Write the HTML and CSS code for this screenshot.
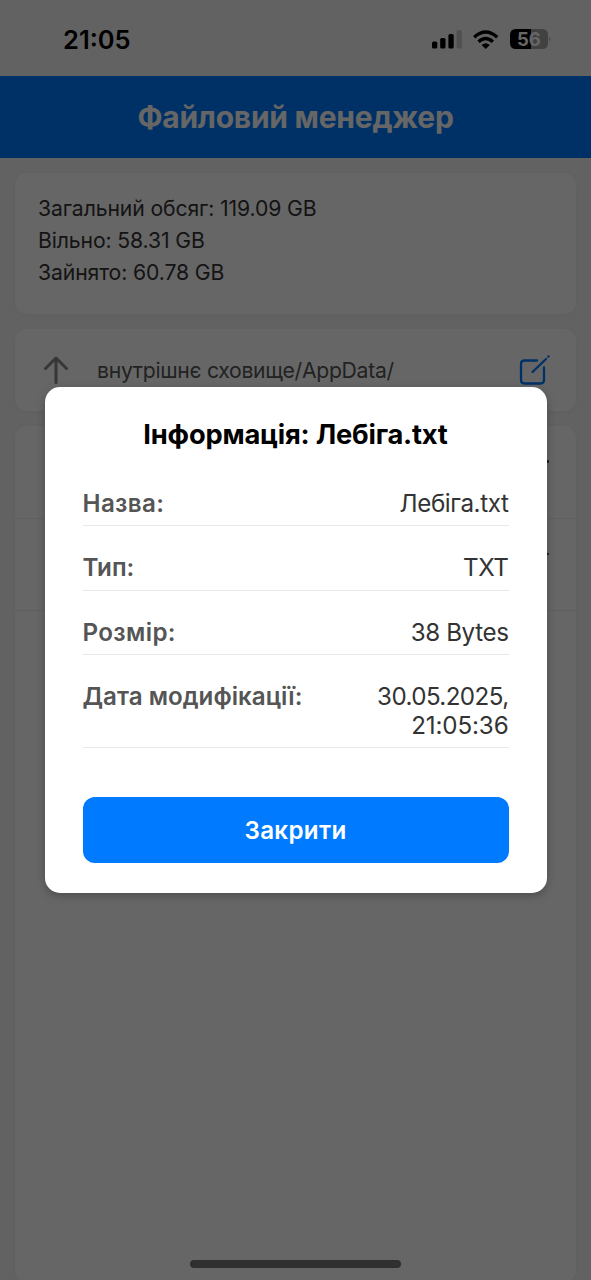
FILE: index.html
```html
<!DOCTYPE html>
<html lang="uk">
<head>
<meta charset="utf-8">
<title>Файловий менеджер</title>
<link rel="stylesheet" href="styles.css">
</head>
<body>
<div class="screen">
  <div class="status-bar">
    <span class="time">21:05</span>
    <svg class="status-icons" width="122" height="30" viewBox="0 0 122 30">
      <rect x="2" y="16.5" width="5.3" height="7" rx="1.6"/>
      <rect x="10.2" y="13" width="5.3" height="10.5" rx="1.6"/>
      <rect x="18.4" y="9" width="5.3" height="14.5" rx="1.6"/>
      <rect x="26.6" y="5" width="5.3" height="18.5" rx="1.6" fill="#c8c8c8"/>
      <g fill="none" stroke="#000" stroke-width="3.4">
        <path d="M44.2 12.2Q55.7 2 67.2 12.2"/>
        <path d="M48.5 16.7Q55.7 10.2 62.9 16.7"/>
      </g>
      <path d="M51.6 20Q55.7 16.4 59.8 20L55.7 24Z"/>
      <path d="M86 4H101V24H86Q80 24 80 18V10Q80 4 86 4Z"/>
      <path d="M101 4H112Q118 4 118 10V18Q118 24 112 24H101Z" fill="#a3a3a3"/>
      <path d="M119.3 11.4Q121.5 14 119.3 16.8Z" fill="#a3a3a3"/>
      <text class="battery-label" x="87" y="20.5">56</text>
    </svg>
  </div>
  <header class="app-header">Файловий менеджер</header>
  <main class="content">
    <section class="card storage">
      <div><span>Загальний обсяг: 119.09 GB</span></div>
      <div><span>Вільно: 58.31 GB</span></div>
      <div><span>Зайнято: 60.78 GB</span></div>
    </section>
    <section class="card path-bar">
      <svg class="up-icon" width="28" height="30" viewBox="0 0 28 30"><path d="M14 27.500V3M3.500 13.500L14 3L24.500 13.500"/></svg>
      <span class="path">внутрішнє сховище/AppData/</span>
      <svg class="edit-icon" width="32" height="32" viewBox="0 0 32 32"><path d="M18 6.500H5.500Q2 6.500 2 10V26Q2 29.500 5.500 29.500H21.500Q25 29.500 25 26V13.500"/><path d="M13.500 18L27 5M29.300 2.600L29.500 2.400"/></svg>
    </section>
    <section class="card files">
      <div class="file-row"><i class="file-mark"></i></div>
      <div class="file-row"><i class="file-mark"></i></div>
    </section>
  </main>
  <div class="overlay">
    <div class="modal">
      <h2 class="modal-title">Інформація: Лебіга.txt</h2>
      <div class="row"><span class="label short">Назва:</span><span class="value">Лебіга.txt</span></div>
      <div class="row"><span class="label">Тип:</span><span class="value">TXT</span></div>
      <div class="row"><span class="label short">Розмір:</span><span class="value">38 Bytes</span></div>
      <div class="row"><span class="label">Дата модифікації:</span><span class="value"><span class="date">30.05.2025,</span><br><span class="clock">21:05:36</span></span></div>
      <button class="close">Закрити</button>
    </div>
  </div>
  <div class="home-indicator"></div>
</div>
</body>
</html>
```
FILE: styles.css
```css
* { box-sizing: border-box; }
body { margin: 0; font-family: Inter, "Noto Sans", sans-serif; }
.screen {
  position: relative;
  width: 591px;
  height: 1280px;
  overflow: hidden;
  background: #f5f5f5;
  display: flex;
  flex-direction: column;
}
.status-bar {
  height: 76px;
  flex: none;
  display: flex;
  justify-content: space-between;
  align-items: flex-start;
  padding: 25px 39px 0 63px;
}
.time { font-size: 25.5px; line-height: 30px; font-weight: 600; }
.battery-label { font-size: 18.5px; font-weight: 700; fill: #fff; }
.app-header {
  flex: none;
  height: 81.5px;
  background: #007aff;
  color: #fff;
  font-size: 30px;
  font-weight: 700;
  line-height: 82px;
  letter-spacing: -.25px;
  text-align: center;
}
.content {
  flex: 1;
  display: flex;
  flex-direction: column;
  gap: 15px;
  padding: 15px 15px 0;
}
.card {
  background: #fff;
  border-radius: 12px;
  box-shadow: 0 1px 6px rgba(0, 0, 0, .04);
}
.storage {
  height: 141.5px;
  padding: 19px 23px;
  font-size: 21.2px;
  line-height: 32px;
  letter-spacing: -.12px;
  color: #333;
}
.path-bar {
  height: 82px;
  display: flex;
  align-items: center;
  padding: 0 25px 0 27px;
}
.up-icon { fill: none; stroke: #888; stroke-width: 3; stroke-linecap: round; stroke-linejoin: round; }
.edit-icon { fill: none; stroke: #007aff; stroke-width: 2.3; stroke-linecap: round; }
.path { flex: 1; margin-left: 27px; font-size: 21.2px; letter-spacing: -.3px; color: #555; }
.files { height: 856px; }
.file-row {
  height: 92.5px;
  border-bottom: 1.5px solid #eee;
  display: flex;
  justify-content: flex-end;
  padding: 34px 27.5px 0 0;
}
.file-mark { width: 2.5px; height: 2.5px; border-radius: 50%; background: #444; }
.overlay {
  position: absolute;
  inset: 0;
  background: rgba(0, 0, 0, .6);
  display: flex;
  align-items: center;
  justify-content: center;
}
.modal {
  width: 502px;
  height: 505.5px;
  padding: 31px 38px 30px;
  border-radius: 15px;
  background: #fff;
  box-shadow: 0 3px 9px rgba(0, 0, 0, .25);
}
.modal-title {
  margin: 0 0 37px;
  font-size: 27.3px;
  line-height: 34px;
  font-weight: 700;
  letter-spacing: -.2px;
  text-align: center;
}
.row {
  display: flex;
  justify-content: space-between;
  margin-bottom: 27px;
  padding-bottom: 7.2px;
  border-bottom: 1px solid #e9e9e9;
  font-size: 24.2px;
  line-height: 29px;
}
.label { font-weight: 600; color: #555; }
.short { letter-spacing: .35px; }
.value { color: #333; text-align: right; letter-spacing: -.4px; }
.date { letter-spacing: -.6px; }
.clock { letter-spacing: -.15px; }
.close {
  display: block;
  width: 100%;
  height: 65.5px;
  margin-top: 49px;
  border: 0;
  border-radius: 12px;
  background: #007aff;
  color: #fff;
  font: 600 24.2px/65px Inter, sans-serif;
  letter-spacing: .3px;
}
.home-indicator {
  position: absolute;
  left: 190px;
  bottom: 12px;
  width: 211px;
  height: 8px;
  border-radius: 4px;
  background: #303030;
}
```
